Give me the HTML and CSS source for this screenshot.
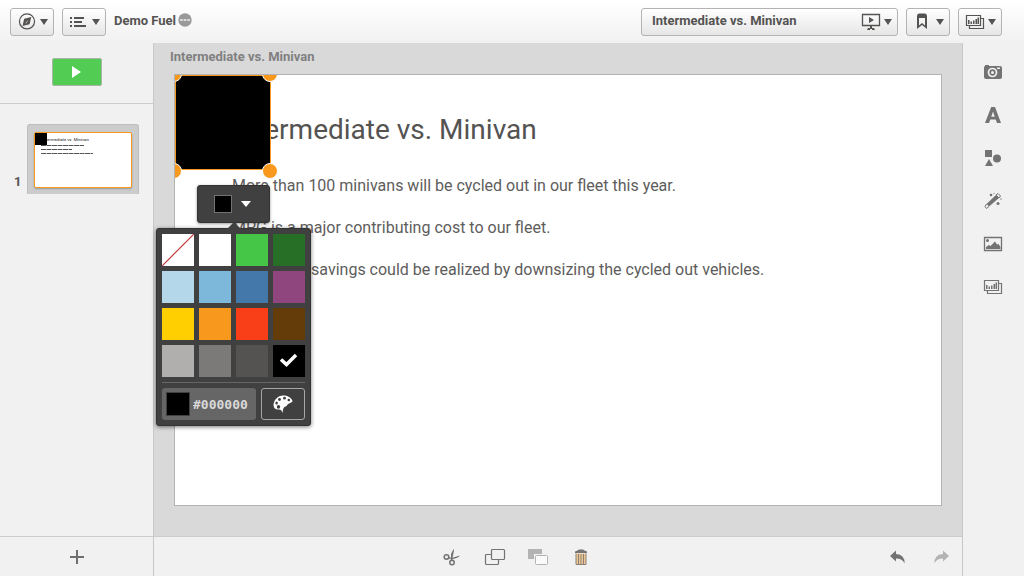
FILE: index.html
```html
<!DOCTYPE html>
<html lang="en">
<head>
<meta charset="utf-8">
<title>Demo Fuel - Storytelling</title>
<link rel="stylesheet" href="styles.css">
</head>
<body>
<svg class="defs" aria-hidden="true">
  <symbol id="charts" viewBox="0 0 20 16">
    <path d="M1.500 1.500h14v10h-14zM16 4.500h2.500v10h-14V12" fill="none" stroke="currentColor" stroke-width="1.200"/>
    <path d="M3 6h1.500v4H3zM5.500 7.500h1.500v2.500H5.500zM8 6.500h1.500V10H8zM10.500 5H12v5h-1.500zM12.500 3.500H14V10h-1.500z" fill="currentColor"/>
  </symbol>
</svg>
<div class="app">
  <header class="topbar">
    <button class="btn" aria-label="Navigation">
      <svg width="18" height="18" viewBox="0 0 16 16"><circle cx="8" cy="7.500" r="6.700" fill="none" stroke="currentColor" stroke-width="1.100"/><path d="M5.500 5 11.800 3.500l-1.500 6.500L4 11.500z" fill="currentColor"/><path d="M9.500 5.500 7.800 8.700 6.300 9.500z" fill="#eee"/></svg>
      <span class="caret"></span>
    </button>
    <button class="btn" aria-label="Menu">
      <svg width="18" height="12" viewBox="0 0 18 12" fill="currentColor"><path d="M0 1h2v2H0zM0 5h2v2H0zM0 9h2v2H0zM4 1h10v2H4zM4 5h8v2H4zM4 9h12v2H4z"/></svg>
      <span class="caret"></span>
    </button>
    <h1 class="app-name">Demo Fuel</h1>
    <svg class="more" width="14" height="18" viewBox="0 0 14 18"><circle cx="7" cy="7" r="6.700" fill="#999"/><path d="M2 6h2.700v2H2zM5.600 6h2.700v2H5.600zM9.200 6h2.700v2H9.200z" fill="#ddd"/></svg>
    <span class="spacer"></span>
    <button class="btn story-btn">
      <span class="story-label">Intermediate vs. Minivan</span>
      <svg width="20" height="18" viewBox="0 0 20 18"><path d="M1.500 1.500h17v11h-17z" fill="none" stroke="currentColor" stroke-width="1.300"/><path d="M8 4 13 7 8 10zM9 13h2v2H9zM7 15h6l1 2h-3v-1H9v1H6z" fill="currentColor"/></svg>
      <span class="caret"></span>
    </button>
    <button class="btn" aria-label="Bookmarks">
      <svg width="16" height="18" viewBox="0 0 16 18"><path d="M3 3q0-2.500 2-2.500h6q2 0 2 2.500v13l-5-4-5 4zM5 5v7.500l3-2.500 3 2.500V5z" fill="currentColor" fill-rule="evenodd"/></svg>
      <span class="caret"></span>
    </button>
    <button class="btn sheets-btn" aria-label="Sheets">
      <svg width="20" height="16"><use href="#charts"/></svg>
      <span class="caret"></span>
    </button>
  </header>

  <aside class="slides">
    <div class="play-row">
      <button class="play" aria-label="Play the story"><svg width="10" height="14" viewBox="0 0 10 14"><path d="M0 1 9 7 0 13z" fill="#fff"/></svg></button>
    </div>
    <ol class="thumbs">
      <li class="thumb-row">
        <span class="thumb-no">1</span>
        <button class="thumb" aria-label="Slide 1">
          <span class="thumb-frame">
            <svg class="thumb-slide" viewBox="0 0 96 54" font-family="Roboto, sans-serif" fill="#222">
              <text x="7" y="8" font-size="4.300">Intermediate vs. Minivan</text>
              <path d="M6 12.500h43M6 16.500h31M6 20.500h52" stroke="#555" stroke-width="1" stroke-dasharray="5 .5"/>
              <path d="M0 0h12v12H0z" fill="#000"/>
            </svg>
          </span>
        </button>
      </li>
    </ol>
    <button class="add" aria-label="Add slide"><svg width="14" height="14" viewBox="0 0 14 14"><path d="M6 0h2v6h6v2H8v6H6V8H0V6h6z" fill="currentColor"/></svg></button>
  </aside>

  <main class="stage">
    <h2 class="stage-title">Intermediate vs. Minivan</h2>
    <div class="canvas">
      <article class="slide">
        <h3 class="slide-title">Intermediate vs. Minivan</h3>
        <p class="line">More than 100 minivans will be cycled out in our fleet this year.</p>
        <p class="line">MPG is a major contributing cost to our fleet.</p>
        <p class="line">Significant savings could be realized by downsizing the cycled out vehicles.</p>
        <div class="shape">
          <span class="handle tl"></span><span class="handle tr"></span>
          <span class="handle bl"></span><span class="handle br"></span>
        </div>
      </article>
      <button class="shape-bar" aria-label="Fill color">
        <span class="current"></span><span class="caret light"></span>
      </button>
      <section class="palette" aria-label="Color picker">
        <div class="swatches">
          <button class="swatch none" aria-label="No color"><svg viewBox="0 0 32 32"><path d="M0 32 32 0" stroke="#c33c41" stroke-width="1.200"/></svg></button>
          <button class="swatch white" aria-label="White"></button>
          <button class="swatch green" aria-label="Green"></button>
          <button class="swatch forest" aria-label="Dark green"></button>
          <button class="swatch pale" aria-label="Pale blue"></button>
          <button class="swatch sky" aria-label="Light blue"></button>
          <button class="swatch blue" aria-label="Blue"></button>
          <button class="swatch purple" aria-label="Purple"></button>
          <button class="swatch yellow" aria-label="Yellow"></button>
          <button class="swatch orange" aria-label="Orange"></button>
          <button class="swatch red" aria-label="Red"></button>
          <button class="swatch brown" aria-label="Brown"></button>
          <button class="swatch silver" aria-label="Light gray"></button>
          <button class="swatch gray" aria-label="Gray"></button>
          <button class="swatch slate" aria-label="Dark gray"></button>
          <button class="swatch black" aria-label="Black"><svg viewBox="0 0 32 32"><path d="M8 14.500 13.500 19.500 23 10" fill="none" stroke="#fff" stroke-width="3.500"/></svg></button>
        </div>
        <div class="custom">
          <label class="hex"><span class="hex-chip"></span><input class="hex-input" type="text" value="#000000" aria-label="Hex color"></label>
          <button class="wheel" aria-label="More colors"><svg width="20" height="18" viewBox="0 0 20 18"><path d="M10 .5C5 .5 .5 5 .5 10c0 3 2 4.500 4.500 4.500 2 0 3.500 0 4.500 3.500.5-2 .2-4 1.500-5.500 1-1.300 2.300-.8 3.300-2.500C15.500 8 19 8 19.500 6 18.500 2.500 14.500.5 10 .5z" fill="#fff"/><g fill="#404040"><circle cx="6.500" cy="4.500" r="1.400"/><circle cx="11.500" cy="3.200" r="1.400"/><circle cx="15.800" cy="5" r="1.300"/><ellipse cx="3.600" cy="8" rx="1.300" ry="1.600"/><ellipse cx="5.500" cy="11.800" rx="1.700" ry="1.900"/></g></svg></button>
        </div>
      </section>
    </div>
  </main>

  <footer class="actions">
    <div class="edit-tools">
      <button class="tool" aria-label="Cut"><svg width="18" height="18" viewBox="0 0 18 18"><g fill="none" stroke="currentColor" stroke-width="1.500"><ellipse cx="3.500" cy="9" rx="2.300" ry="2.200"/><ellipse cx="9" cy="14.500" rx="2.200" ry="2.300"/></g><path d="M5 8.500 8.500 10 17 7.500Q15 10 9.500 11L9.500 13 7.500 13 8 10.800 5 10.500zM8 10 8 6 10.500 1 11 2.500 9.500 10z" fill="currentColor"/></svg></button>
      <button class="tool" aria-label="Copy"><svg width="22" height="18" viewBox="0 0 22 18" fill="none" stroke="currentColor" stroke-width="1.200"><rect x="7.500" y="1.500" width="13" height="10" rx="1"/><path d="M7 6.500H2.500q-1 0-1 1v8q0 1 1 1h11q1 0 1-1V12"/></svg></button>
      <button class="tool off" disabled aria-label="Paste"><svg width="22" height="18" viewBox="0 0 22 18"><path d="M1 1h14v5H7v5H1z" fill="currentColor"/><rect x="8.500" y="7.500" width="12" height="9" rx="1" fill="#fafafa" stroke="currentColor"/></svg></button>
      <button class="tool" aria-label="Delete"><svg width="14" height="18" viewBox="0 0 14 18"><path d="M1 3.500Q4 2.500 5 1.500h4q1 1 4 2V5H1z" fill="currentColor"/><path d="M2 5.500h10v11H2z" fill="#edc694"/><path d="M2 5.500v11h10v-11M4.500 6v10M7 6v10M9.500 6v10" fill="none" stroke="#8a8174"/></svg></button>
    </div>
    <div class="history">
      <button class="tool" aria-label="Undo"><svg width="16" height="14" viewBox="0 0 16 14"><path d="M0 6 6 0.500V4q9 .5 8.500 9.500Q12.500 8.500 6 8.500V11.500z" fill="currentColor"/></svg></button>
      <button class="tool off" disabled aria-label="Redo"><svg width="16" height="14" viewBox="0 0 16 14"><path d="M16 6 10 .5V4Q1 4.500 1.500 13.500 3.500 8.500 10 8.500V11.500z" fill="currentColor"/></svg></button>
    </div>
  </footer>

  <nav class="library" aria-label="Story tools">
    <button class="tool" aria-label="Snapshots"><svg width="20" height="16" viewBox="0 0 20 16"><path d="M1 2.500h1V1h4v1h11q2 0 2 2v9q0 2-2 2H3q-2 0-2-2z" fill="currentColor"/><circle cx="9.500" cy="8.500" r="4" fill="none" stroke="#f1f1f1" stroke-width="1.700"/><circle cx="9.500" cy="8.500" r="1.500" fill="#f1f1f1"/><path d="M14 3.500h3V5h-3z" fill="#f1f1f1"/></svg></button>
    <button class="tool" aria-label="Text"><svg width="18" height="18" viewBox="0 0 18 18"><path d="M7.200 1h3.800l6 16h-4l-1.300-3.500H6.300L5 17H1zM7.300 10.700h3.400L9 5.500z" fill="currentColor" fill-rule="evenodd"/></svg></button>
    <button class="tool" aria-label="Shapes"><svg width="18" height="18" viewBox="0 0 18 18" fill="currentColor"><path d="M1 1h7v7H1zM5 10l4 7H1z"/><circle cx="13" cy="9.500" r="4"/></svg></button>
    <button class="tool" aria-label="Effects"><svg width="18" height="18" viewBox="0 0 18 18" fill="currentColor"><path d="m12 3 3 3L5 14.500 2.500 12z"/><path d="m12 3 2-1.500L16.500 4 15 6zM2.500 12 1 14.500 2.500 16.500 5 14.500" fill="none" stroke="currentColor"/><circle cx="7" cy="3" r="1.300"/><circle cx="14" cy="11.500" r="1.500"/><circle cx="17" cy="7" r=".7"/><circle cx="10" cy="1.500" r=".6"/></svg></button>
    <button class="tool" aria-label="Images"><svg width="20" height="16" viewBox="0 0 20 16"><path d="M1.500 1.500h17v13h-17z" fill="none" stroke="currentColor" stroke-width="1.300"/><path d="M3 13v-2l3-2 1.500 1L12 5.500l2 3 1.500-.5L17.500 11v2z" fill="currentColor"/><circle cx="4.500" cy="4.500" r="1.500" fill="currentColor"/></svg></button>
    <button class="tool" aria-label="Sheet library"><svg width="20" height="16"><use href="#charts"/></svg></button>
  </nav>
</div>
</body>
</html>
```
FILE: styles.css
```css
* { box-sizing: border-box; }
body {
  margin: 0;
  font-family: Roboto, "Liberation Sans", sans-serif;
  color: #545352;
}
button { padding: 0; border: 0; background: none; font: inherit; color: inherit; }
svg { display: block; flex: none; }
h1, h2, h3, p, ol { margin: 0; padding: 0; }
.defs { position: absolute; width: 0; height: 0; }

.app {
  display: grid;
  grid-template: 43px 1fr 40px / 154px 1fr 62px;
  grid-template-areas: "top top top" "slides stage library" "slides actions library";
  min-height: 100vh;
  background: #f1f1f1;
}

.topbar {
  grid-area: top;
  display: flex;
  align-items: center;
  gap: 8px;
  padding: 0 22px 0 10px;
  background: linear-gradient(#fff, #f1f1f1);
}
.btn {
  display: flex;
  align-items: center;
  justify-content: space-between;
  width: 44px;
  height: 28px;
  padding: 0 5px 0 7px;
  border: 1px solid #b3b3b3;
  border-radius: 3px;
  background: linear-gradient(#fff, #e6e6e6);
}
.caret {
  border: 4px solid transparent;
  border-top: 6px solid #545352;
  border-bottom: 0;
}
.caret.light { border-width: 6px 5px 0; border-top-color: #fff; }
.app-name, .story-label, .stage-title { font-size: 13px; line-height: 16px; font-weight: 700; }
.app-name, .story-label { padding-bottom: 2px; }
.more { margin-left: -6px; }
.spacer { flex: 1; }
.story-btn { width: 257px; gap: 3px; padding-left: 10px; }
.story-label { flex: 1; text-align: left; }
.sheets-btn { padding-left: 6px; }

.slides {
  grid-area: slides;
  display: flex;
  flex-direction: column;
  border-right: 1px solid #c8c8c8;
}
.play-row {
  display: flex;
  justify-content: center;
  padding: 15px 0 17px;
  border-bottom: 1px solid #ccc;
}
.play {
  display: flex;
  align-items: center;
  justify-content: center;
  width: 50px;
  height: 28px;
  border: 1px solid #a9b5a9;
  border-radius: 2px;
  background: #52cc52;
}
.thumbs { flex: 1; padding: 20px 14px; list-style: none; }
.thumb-row { display: flex; align-items: flex-end; gap: 6px; }
.thumb-no { width: 7px; padding-bottom: 4px; font-size: 13px; line-height: 16px; font-weight: 700; }
.thumb {
  flex: 1;
  padding: 7px 6px 6px;
  border: 1px solid #bfbfbf;
  border-bottom: 0;
  border-radius: 3px 3px 0 0;
  background: #ccc;
}
.thumb-frame {
  display: block;
  border: 1px solid #f8981d;
  border-radius: 2px;
  background: #fff;
  box-shadow: 0 1px 2px #999;
}
.thumb-slide { width: 100%; }
.add {
  display: flex;
  align-items: center;
  justify-content: center;
  height: 40px;
  border-top: 1px solid #ccc;
  color: #6e6e6e;
}

.stage { grid-area: stage; display: flex; flex-direction: column; padding: 6px 20px 30px; background: #d9d9d9; }
.stage-title { padding-bottom: 9px; margin-left: -4px; color: #808080; }
.canvas { position: relative; flex: 1; display: flex; }
.slide {
  position: relative;
  flex: 1;
  overflow: hidden;
  padding: 36px 57px;
  border: 1px solid #b3b3b3;
  background: #fff;
}
.slide-title { margin-bottom: 26px; font-size: 28px; line-height: 38px; font-weight: 400; }
.line { margin-bottom: 20px; font-size: 16px; line-height: 22px; color: #5e5d5c; }
.shape {
  position: absolute;
  top: 0;
  left: 0;
  width: 96px;
  height: 95px;
  border: 1px solid #f8981d;
  background: #000;
}
.handle { position: absolute; width: 16px; height: 16px; border: 1px solid #fff; border-radius: 50%; background: #f8981d; }
.tl, .tr { top: -10px; }
.bl, .br { bottom: -10px; }
.tl, .bl { left: -10px; }
.tr, .br { right: -8px; }

.shape-bar {
  position: absolute;
  top: 111px;
  left: 23px;
  display: flex;
  align-items: center;
  justify-content: center;
  gap: 9px;
  width: 73px;
  height: 38px;
  padding-right: 2px;
  border: 1px solid #333;
  border-radius: 3px;
  background: #404040;
  box-shadow: 0 1px 3px #0006;
}
.current { width: 18px; height: 18px; border: 1px solid #737373; background: #000; }
.palette {
  position: absolute;
  top: 154px;
  left: -18px;
  padding: 5px;
  border: 1px solid #333;
  border-radius: 3px;
  background: #404040;
  box-shadow: 0 1px 4px #0008;
}
.palette::before {
  content: "";
  position: absolute;
  bottom: 100%;
  left: 70px;
  border: 7px solid transparent;
  border-top: 0;
  border-bottom-color: #404040;
}
.swatches {
  display: grid;
  grid-template-columns: repeat(4, 32px);
  grid-auto-rows: 32px;
  gap: 5px;
  padding-bottom: 5px;
  border-bottom: 1px solid #666;
}
.none, .white { background: #fff; }
.green { background: #46c646; }
.forest { background: #276e27; }
.pale { background: #b5d7ea; }
.sky { background: #7db8da; }
.blue { background: #4477aa; }
.purple { background: #8f467e; }
.yellow { background: #ffcf02; }
.orange { background: #f8981d; }
.red { background: #f93f17; }
.brown { background: #633c0a; }
.silver { background: #b0afae; }
.gray { background: #7b7a78; }
.slate { background: #545352; }
.black { background: #000; }
.custom { display: flex; gap: 5px; padding-top: 5px; }
.hex {
  display: flex;
  align-items: center;
  gap: 3px;
  width: 94px;
  height: 32px;
  padding: 4px;
  border-radius: 3px;
  background: #666;
}
.hex-chip { flex: none; width: 24px; height: 24px; border: 1px solid #404040; background: #000; }
.hex-input {
  width: 60px;
  padding: 0;
  border: 0;
  background: none;
  font: bold 13px "DejaVu Sans Mono", monospace;
  color: #d9d9d9;
}
.wheel {
  display: flex;
  align-items: center;
  justify-content: center;
  width: 44px;
  border: 1px solid #a6a6a6;
  border-radius: 3px;
}

.actions {
  grid-area: actions;
  display: grid;
  grid-template-columns: 1fr auto 1fr;
  align-items: start;
  border-top: 1px solid #ccc;
}
.tool { display: flex; align-items: center; justify-content: center; width: 43px; height: 43px; color: #737373; }
.off { color: #b3b3b3; }
.actions .tool { height: 39px; }
.edit-tools { grid-column: 2; display: flex; padding-right: 84px; }
.history { display: flex; justify-content: flex-end; }
.library {
  grid-area: library;
  display: flex;
  flex-direction: column;
  align-items: center;
  padding: 7px 2px 0 0;
  border-left: 1px solid #c8c8c8;
}
```
